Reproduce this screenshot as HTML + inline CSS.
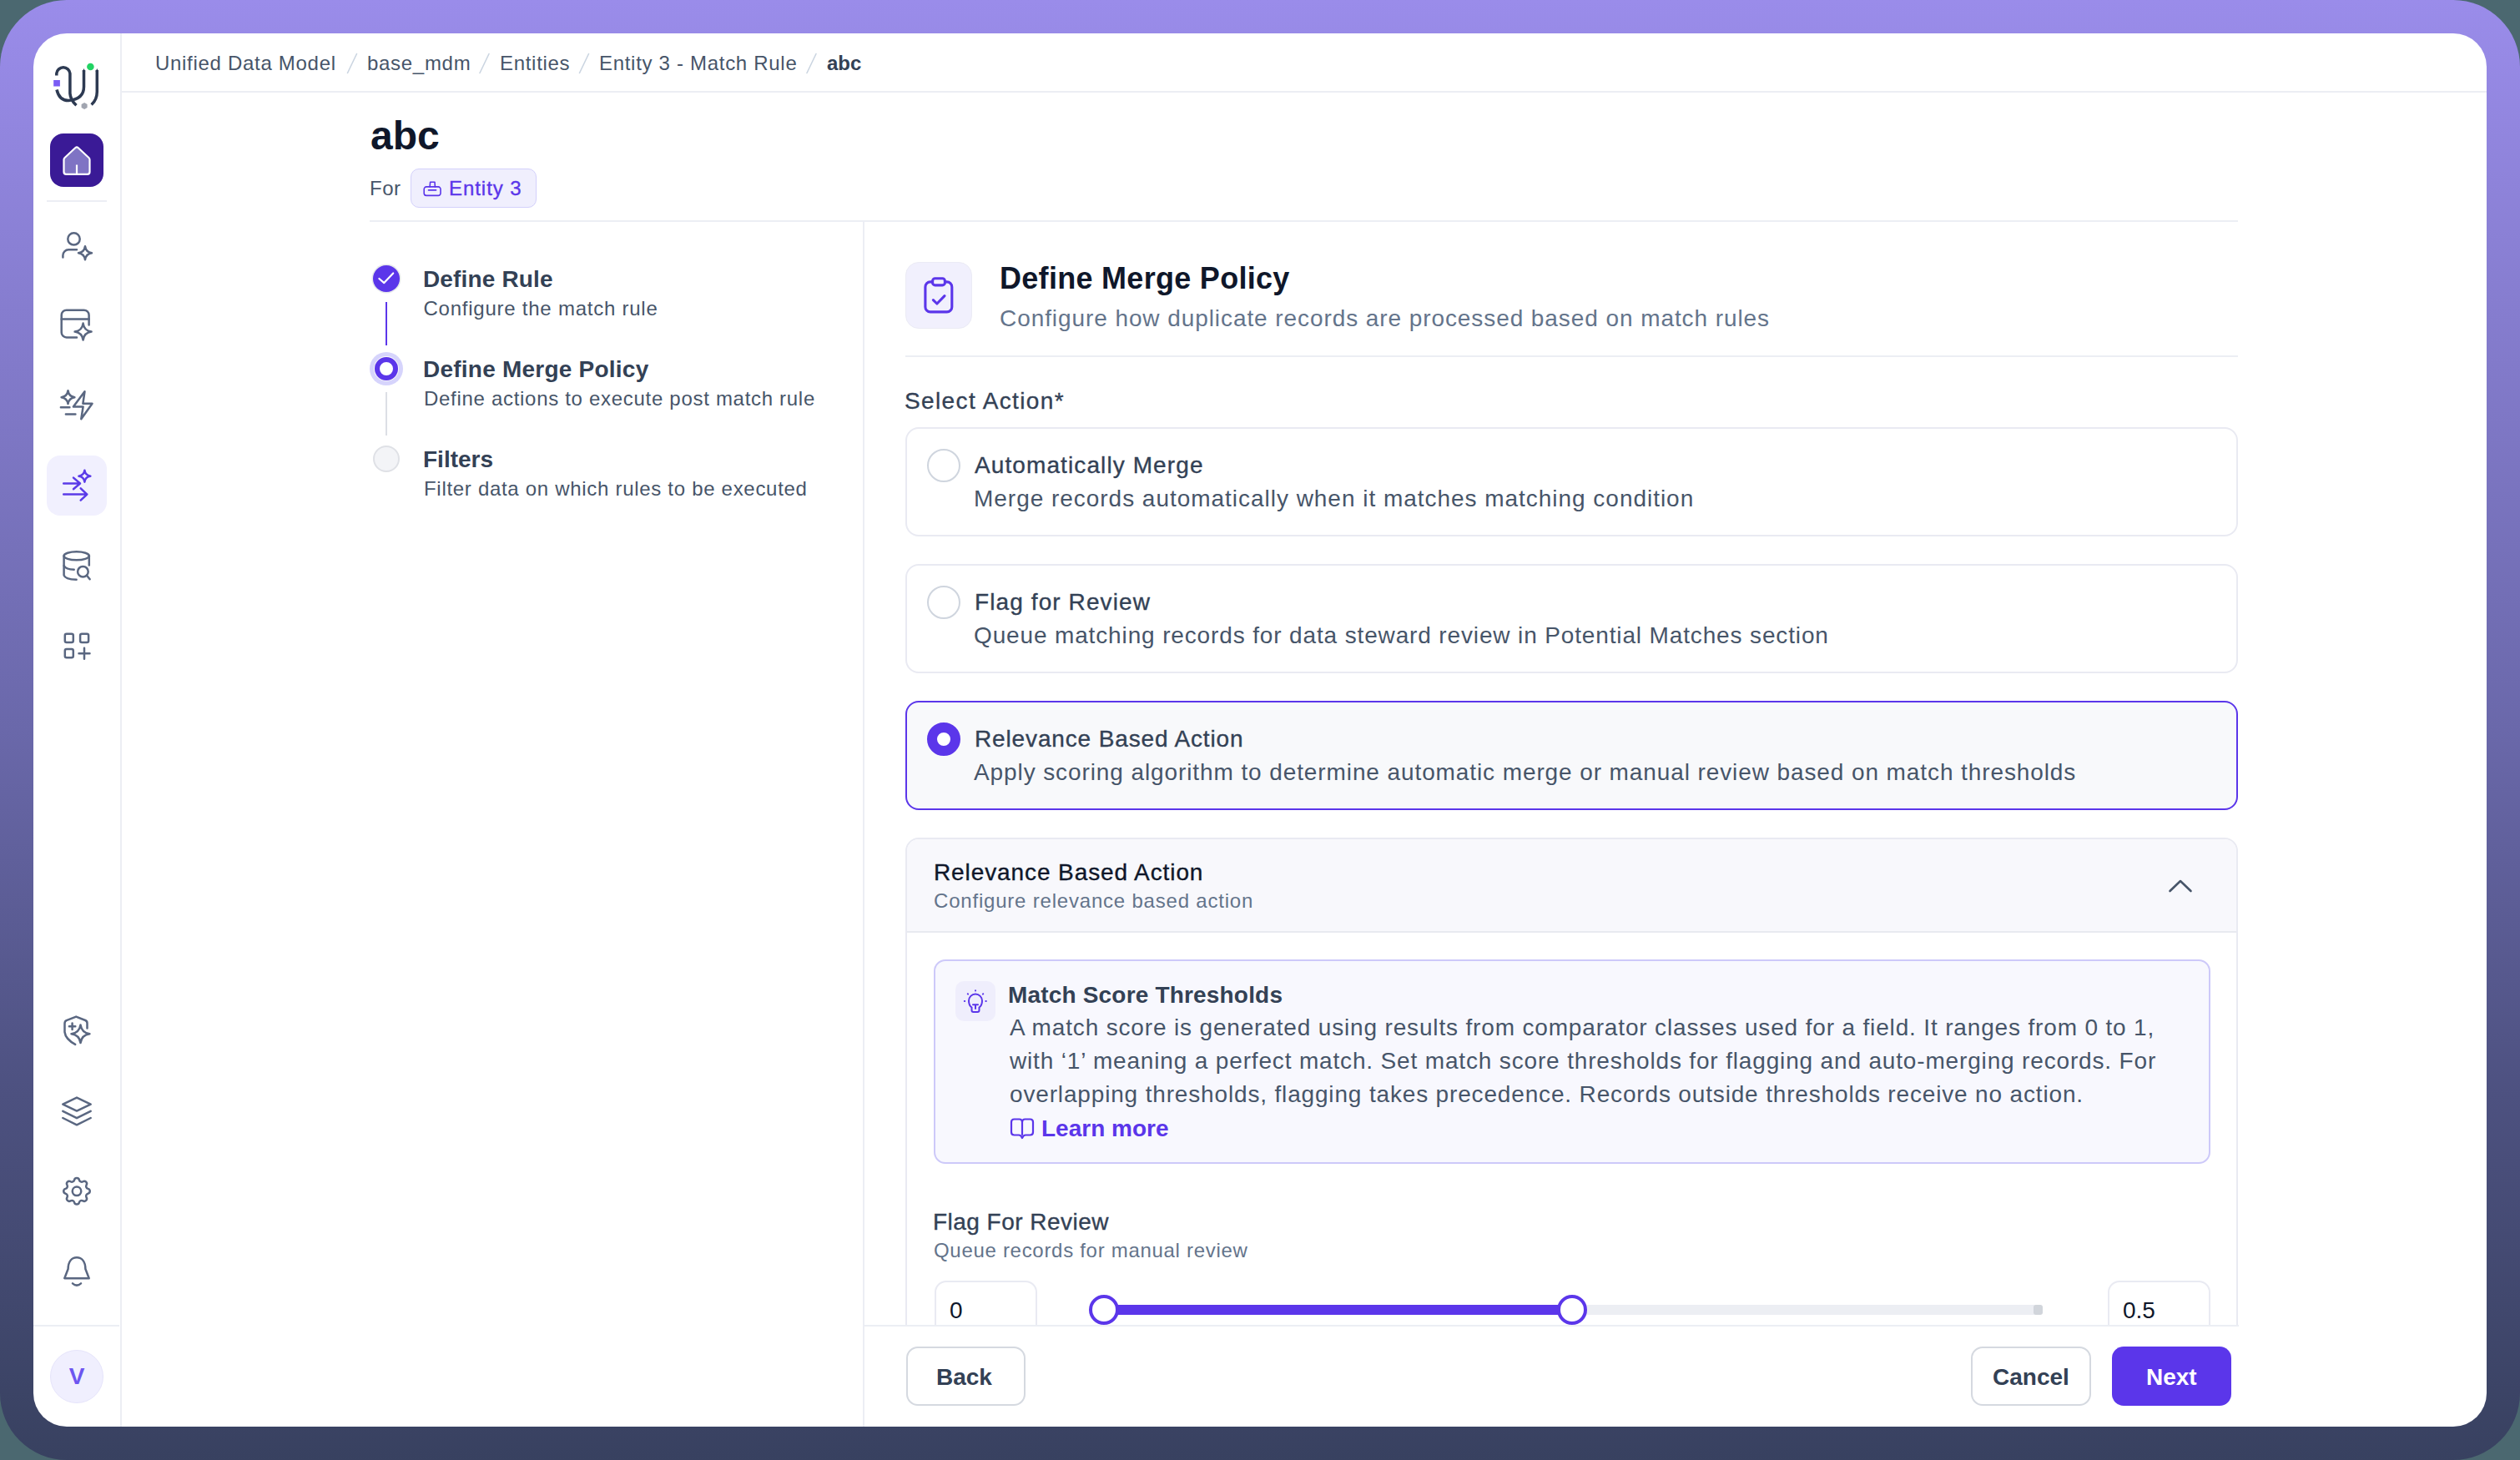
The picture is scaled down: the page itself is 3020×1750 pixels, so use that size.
<!DOCTYPE html>
<html>
<head>
<meta charset="utf-8">
<style>
*{box-sizing:border-box;margin:0;padding:0}
html,body{width:3020px;height:1750px;overflow:hidden;background:#4b6870;font-family:"Liberation Sans",sans-serif}
.frame{position:absolute;left:0;top:0;width:3020px;height:1750px;border-radius:80px;background:linear-gradient(180deg,#9a8cea 0%,#6a68aa 50%,#4d5180 75%,#384160 100%)}
.card{position:absolute;left:40px;top:40px;width:2940px;height:1670px;border-radius:40px;background:#fff;overflow:hidden}
.a{position:absolute;white-space:nowrap;line-height:1}
.ln{position:absolute;background:#eceef4}
svg{position:absolute;overflow:visible}
.ic{fill:none;stroke:#5a6781;stroke-width:2.5;stroke-linecap:round;stroke-linejoin:round}
.t24{font-size:24px;letter-spacing:0.7px}
.t28{font-size:28px;letter-spacing:0.87px}
.med{-webkit-text-stroke:0.35px currentColor}
</style>
</head>
<body>
<div class="frame"></div>
<div class="card"></div>

<!-- sidebar border, topbar border -->
<div class="ln" style="left:144px;top:40px;width:2px;height:1670px"></div>
<div class="ln" style="left:145px;top:109px;width:2835px;height:2px"></div>
<div class="ln" style="left:56px;top:240px;width:72px;height:2px"></div>
<div class="ln" style="left:40px;top:1588px;width:103px;height:2px"></div>

<!-- LOGO -->
<svg style="left:58px;top:68px" width="70" height="70" viewBox="0 0 70 70">
  <g fill="none" stroke="#2d3a52" stroke-width="3.5" stroke-linecap="butt">
    <path d="M9.8 22.5 V20 A8.1 8.1 0 0 1 25.9 20 V44 Q26.5 52 33.5 58.3"/>
    <path d="M10 39.5 Q13 52.5 24 52.5 Q42.5 51 42.5 36 V16"/>
    <path d="M58.3 16 V42 Q58.3 51.5 51.6 57.5"/>
  </g>
  <rect x="6.2" y="28" width="7.7" height="7.5" fill="#7a5cf5"/>
  <polygon points="40.75,18 42.5,14 44.25,18" fill="#2d3a52"/><polygon points="56.55,18 58.3,14 60.05,18" fill="#2d3a52"/>
  <circle cx="50.4" cy="12" r="4.3" fill="#22d363"/>
  <polygon points="43.1,55 46.6,57 46.6,61 43.1,63 39.6,61 39.6,57" fill="#a1a5b0"/>
</svg>

<!-- HOME -->
<div style="position:absolute;left:60px;top:160px;width:64px;height:64px;border-radius:16px;background:#3a1a96"></div>
<svg style="left:60px;top:160px" width="64" height="64" viewBox="0 0 64 64">
  <path d="M16.5 46 V31.5 Q16.5 30 17.6 29 L30.5 17 Q32 15.6 33.5 17 L46.4 29 Q47.5 30 47.5 31.5 V46 Q47.5 48.8 44.7 48.8 H19.3 Q16.5 48.8 16.5 46 Z" fill="#7f73c4" stroke="#fff" stroke-width="2.2" stroke-linejoin="round"/>
  <path d="M32 49 V37.5" stroke="#fff" stroke-width="2.2"/>
</svg>

<!-- user-star -->
<svg class="ic" style="left:62px;top:264px" width="60" height="60" viewBox="0 0 60 60">
  <circle cx="26.5" cy="22.4" r="7.2"/>
  <path d="M13.4 44.5 V42 A6.7 6.7 0 0 1 20.1 35.3 H30"/>
  <path d="M40 31.3 Q41 38.3 48 39.3 Q41 40.3 40 47.3 Q39 40.3 32 39.3 Q39 38.3 40 31.3 Z"/>
</svg>
<!-- app window sparkle -->
<svg class="ic" style="left:62px;top:359px" width="60" height="60" viewBox="0 0 60 60">
  <path d="M30 45.4 H17.7 A6 6 0 0 1 11.7 39.4 V18.7 A6 6 0 0 1 17.7 12.7 H38.6 A6 6 0 0 1 44.6 18.7 V30.6"/>
  <path d="M11.7 23.6 H44.6"/>
  <path d="M37.6 28.6 Q38.8 37.4 47.6 38.6 Q38.8 39.8 37.6 48.6 Q36.4 39.8 27.6 38.6 Q36.4 37.4 37.6 28.6 Z"/>
</svg>
<!-- bolt sparkle -->
<svg class="ic" style="left:62px;top:455px" width="60" height="60" viewBox="0 0 60 60">
  <path d="M19.5 13.3 Q20.5 20.2 27.4 21.2 Q20.5 22.2 19.5 29.1 Q18.5 22.2 11.6 21.2 Q18.5 20.2 19.5 13.3 Z"/>
  <path d="M10.9 33.3 H21.4 M16.9 41.5 H28.4"/>
  <path d="M39.5 14.2 L25.9 32.5 H37.6 L35.3 47.3 L48.5 28.8 H37.4 Z"/>
</svg>
<!-- selected arrows -->
<div style="position:absolute;left:56px;top:546px;width:72px;height:72px;border-radius:16px;background:#f1f0fe"></div>
<svg class="ic" style="left:56px;top:546px;stroke:#5b3be8" width="72" height="72" viewBox="0 0 72 72">
  <path d="M20.2 33.5 H40 M32 26.6 L40 33.5 L32 40.2"/>
  <path d="M20.2 46.6 H48.3 M40.7 39.4 L48.3 46.6 L40.7 53.7"/>
  <path d="M45.4 17.7 Q46.2 23.9 52.4 24.7 Q46.2 25.5 45.4 31.7 Q44.6 25.5 38.4 24.7 Q44.6 23.9 45.4 17.7 Z"/>
</svg>
<!-- database search -->
<svg class="ic" style="left:62px;top:647px" width="60" height="60" viewBox="0 0 60 60">
  <ellipse cx="29.7" cy="19.3" rx="15.1" ry="5"/>
  <path d="M14.6 19.3 V42.5 Q16 47.5 29.6 47.7"/>
  <path d="M14.6 31 Q17 35.5 26.7 35.8"/>
  <path d="M44.8 19.3 V30.4"/>
  <circle cx="37.4" cy="38.2" r="6.3"/>
  <path d="M42 42.8 L45.6 47.2"/>
</svg>
<!-- grid plus -->
<svg class="ic" style="left:62px;top:743px" width="60" height="60" viewBox="0 0 60 60">
  <rect x="15.8" y="16.8" width="10" height="10.2" rx="2"/>
  <rect x="34.1" y="16.8" width="10" height="10.2" rx="2"/>
  <rect x="15.8" y="35.1" width="10" height="10.2" rx="2"/>
  <path d="M39 33.8 V46.8 M32.5 40.3 H45.5"/>
</svg>
<!-- shield sparkle -->
<svg class="ic" style="left:62px;top:1204px" width="60" height="60" viewBox="0 0 60 60">
  <path d="M42.5 28.4 V22.5 Q42.5 20 40.3 19 L29.2 14.6 L17.6 19.2 Q15.5 20.2 15.5 22.8 V33 Q16.5 41.5 28.2 47.9"/>
  <path d="M24.6 22.6 V30 M20.9 26.3 H28.3"/>
  <path d="M34.5 24.4 Q35.9 34 45.5 35.2 Q35.9 36.4 34.5 46 Q33.1 36.4 23.5 35.2 Q33.1 34 34.5 24.4 Z"/>
</svg>
<!-- layers -->
<svg class="ic" style="left:62px;top:1300px" width="60" height="60" viewBox="0 0 60 60">
  <path d="M30 15.6 L46.7 23.6 L30 31.6 L13.3 23.6 Z"/>
  <path d="M13.3 31.8 L30 40.2 L46.7 31.8"/>
  <path d="M13.3 40 L30 48.3 L46.7 40"/>
</svg>
<!-- gear -->
<svg class="ic" style="left:62px;top:1396px" width="60" height="60" viewBox="0 0 60 60">
  <g transform="translate(30 31.8) scale(1.75) translate(-12 -12)" style="stroke-width:1.43">
  <path d="M10.325 4.317c.426 -1.756 2.924 -1.756 3.35 0a1.724 1.724 0 0 0 2.573 1.066c1.543 -.94 3.31 .826 2.37 2.37a1.724 1.724 0 0 0 1.065 2.572c1.756 .426 1.756 2.924 0 3.35a1.724 1.724 0 0 0 -1.066 2.573c.94 1.543 -.826 3.31 -2.37 2.37a1.724 1.724 0 0 0 -2.572 1.065c-.426 1.756 -2.924 1.756 -3.35 0a1.724 1.724 0 0 0 -2.573 -1.066c-1.543 .94 -3.31 -.826 -2.37 -2.37a1.724 1.724 0 0 0 -1.065 -2.572c-1.756 -.426 -1.756 -2.924 0 -3.35a1.724 1.724 0 0 0 1.066 -2.573c-.94 -1.543 .826 -3.31 2.37 -2.37c1 .608 2.296 .07 2.572 -1.065z"/>
  <circle cx="12" cy="12" r="3"/>
  </g>
</svg>
<!-- bell -->
<svg class="ic" style="left:62px;top:1492px" width="60" height="60" viewBox="0 0 60 60">
  <path d="M15.3 40.2 H44.7 L40.4 29 C40.2 20 36 15.2 30 15.2 C24 15.2 19.8 20 19.6 29 Z"/>
  <path d="M25 46.4 Q30 50.8 35 46.4"/>
</svg>
<!-- avatar -->
<div style="position:absolute;left:60px;top:1618px;width:64px;height:64px;border-radius:50%;background:#f0effe;border:1px solid #e6e4fb"></div>
<div class="a" style="left:60px;width:64px;text-align:center;top:1636px;font-size:28px;font-weight:700;color:#6d55f0">V</div>

<!-- BREADCRUMB -->
<svg style="left:0;top:0" width="1100" height="110" viewBox="0 0 1100 110"><g stroke="#cbd5e1" stroke-width="1.6" stroke-linecap="round"><path d="M416.5 87.5 L427.5 64.5"/><path d="M575 87.5 L586 64.5"/><path d="M694.5 87.5 L705.5 64.5"/><path d="M967 87.5 L978 64.5"/></g></svg>
<div class="a t24" style="left:186px;top:64px;color:#475569">Unified Data Model</div>

<div class="a t24" style="left:440px;top:64px;color:#475569">base_mdm</div>

<div class="a t24" style="left:599px;top:64px;color:#475569">Entities</div>

<div class="a t24" style="left:718px;top:64px;color:#475569">Entity 3 - Match Rule</div>

<div class="a" style="left:991px;top:64px;font-size:24px;font-weight:700;color:#334155">abc</div>


<!-- TITLE -->
<div class="a" style="left:444px;top:139px;font-size:48px;font-weight:700;color:#0f172a">abc</div>
<div class="a t24" style="left:443px;top:214px;letter-spacing:0.5px;color:#475569">For</div>
<div style="position:absolute;left:492px;top:202px;width:151px;height:47px;border-radius:10px;background:#f0effd;border:1.5px solid #d3d0fb"></div>
<svg style="left:506px;top:215px" width="24" height="22" viewBox="0 0 24 22">
  <g fill="none" stroke="#5b36ea" stroke-width="1.6" stroke-linejoin="round" stroke-linecap="round">
    <path d="M9.1 8.9 L9.6 3.2 H15 L15.4 8.9"/>
    <path d="M5 8.9 H19.2 A2.8 2.8 0 0 1 22 11.7 V16.6 A2.8 2.8 0 0 1 19.2 19.4 H5 A2.8 2.8 0 0 1 2.2 16.6 V11.7 A2.8 2.8 0 0 1 5 8.9 Z"/>
    <path d="M7.5 12.9 H16.6"/>
  </g>
</svg>
<div class="a med" style="left:538px;top:214px;font-size:24px;letter-spacing:0.95px;color:#5b36ea">Entity 3</div>
<div class="ln" style="left:443px;top:264px;width:2239px;height:2px"></div>
<div class="ln" style="left:1034px;top:266px;width:2px;height:1444px"></div>

<!-- STEPPER -->
<div style="position:absolute;left:447px;top:318px;width:32px;height:32px;border-radius:50%;background:#5b36ea;box-shadow:0 0 0 1.5px #e5e7eb"></div>
<svg style="left:438px;top:310px" width="50" height="50" viewBox="0 0 50 50">
  <path d="M16.4 24 L22.3 29.1 L33.2 17.5" fill="none" stroke="#fff" stroke-width="2.2" stroke-linecap="round" stroke-linejoin="round"/>
</svg>
<div style="position:absolute;left:462px;top:362px;width:2px;height:52px;background:#5b36ea"></div>
<div style="position:absolute;left:443px;top:422px;width:40px;height:40px;border-radius:50%;background:#d6d4fc"></div>
<div style="position:absolute;left:448px;top:427px;width:30px;height:30px;border-radius:50%;background:#fbfbf7"></div>
<div style="position:absolute;left:449px;top:428px;width:28px;height:28px;border-radius:50%;background:#fff;border:6px solid #5b36ea"></div>
<div style="position:absolute;left:462px;top:470px;width:2px;height:52px;background:#dcdfe5"></div>
<div style="position:absolute;left:447px;top:534px;width:32px;height:32px;border-radius:50%;background:#f3f4f7;border:2px solid #dfe1e6"></div>

<div class="a" style="left:507px;top:321px;letter-spacing:0.15px;font-size:28px;font-weight:700;color:#334155">Define Rule</div>
<div class="a t24" style="left:507.5px;top:358px;letter-spacing:0.76px;color:#475569">Configure the match rule</div>
<div class="a" style="left:507px;top:429px;font-size:28px;font-weight:700;letter-spacing:0.23px;color:#334155">Define Merge Policy</div>
<div class="a t24" style="left:508px;top:466px;color:#475569">Define actions to execute post match rule</div>
<div class="a" style="left:507px;top:537px;font-size:28px;font-weight:700;color:#334155">Filters</div>
<div class="a t24" style="left:508px;top:574px;color:#475569">Filter data on which rules to be executed</div>

<!-- RIGHT HEADER -->
<div style="position:absolute;left:1085px;top:314px;width:80px;height:80px;border-radius:16px;background:#f1f0fd;border:1px solid #ebebf5"></div>
<svg style="left:1085px;top:314px" width="80" height="80" viewBox="0 0 80 80">
  <g fill="none" stroke="#5b36ea" stroke-width="3.1" stroke-linecap="round" stroke-linejoin="round">
    <path d="M32.6 23.9 H29.9 A6 6 0 0 0 23.9 29.9 V53.9 A6 6 0 0 0 29.9 59.9 H49.8 A6 6 0 0 0 55.8 53.9 V29.9 A6 6 0 0 0 49.8 23.9 H47.4"/>
    <rect x="32.6" y="19.7" width="14.8" height="8.2" rx="3"/>
    <path d="M33.4 45.6 L37.9 50 L47 40.6"/>
  </g>
</svg>
<div class="a" style="left:1198px;top:316px;font-size:36px;font-weight:700;letter-spacing:0.29px;color:#0f172a">Define Merge Policy</div>
<div class="a t28" style="left:1198px;top:368px;letter-spacing:0.92px;color:#64748b">Configure how duplicate records are processed based on match rules</div>
<div class="ln" style="left:1085px;top:426px;width:1597px;height:2px"></div>
<div class="a med" style="left:1084px;top:467px;font-size:28px;letter-spacing:1.37px;color:#334155">Select Action*</div>

<!-- OPTIONS -->
<div style="position:absolute;left:1085px;top:512px;width:1597px;height:131px;border-radius:16px;border:2px solid #e9eaf2;background:#fff"></div>
<div style="position:absolute;left:1111px;top:538px;width:40px;height:40px;border-radius:50%;border:2px solid #cfd5de;background:#fff"></div>
<div class="a med" style="left:1168px;top:544px;font-size:28px;letter-spacing:1.1px;color:#334155">Automatically Merge</div>
<div class="a t28" style="left:1167px;top:584px;letter-spacing:0.97px;color:#475569">Merge records automatically when it matches matching condition</div>

<div style="position:absolute;left:1085px;top:676px;width:1597px;height:131px;border-radius:16px;border:2px solid #e9eaf2;background:#fff"></div>
<div style="position:absolute;left:1111px;top:702px;width:40px;height:40px;border-radius:50%;border:2px solid #cfd5de;background:#fff"></div>
<div class="a med" style="left:1168px;top:708px;font-size:28px;letter-spacing:1.1px;color:#334155">Flag for Review</div>
<div class="a t28" style="left:1167px;top:748px;letter-spacing:0.86px;color:#475569">Queue matching records for data steward review in Potential Matches section</div>

<div style="position:absolute;left:1085px;top:840px;width:1597px;height:131px;border-radius:16px;border:2px solid #5b36ea;background:#f8f9fb"></div>
<div style="position:absolute;left:1111px;top:866px;width:40px;height:40px;border-radius:50%;border:12px solid #5b36ea;background:#fff"></div>
<div class="a med" style="left:1168px;top:872px;font-size:28px;letter-spacing:0.86px;color:#334155">Relevance Based Action</div>
<div class="a t28" style="left:1167px;top:912px;letter-spacing:0.9px;color:#475569">Apply scoring algorithm to determine automatic merge or manual review based on match thresholds</div>

<!-- RELEVANCE SECTION -->
<div style="position:absolute;left:1085px;top:1004px;width:1597px;height:600px;border-radius:16px;border:2px solid #e9eaf2;background:#fff;overflow:hidden">
  <div style="position:absolute;left:0;top:0;width:100%;height:112px;background:#f8f8fc;border-bottom:2px solid #e8eaf0"></div>
</div>
<div class="a med" style="left:1119px;top:1032px;font-size:28px;letter-spacing:0.9px;color:#0f172a">Relevance Based Action</div>
<div class="a t24" style="left:1119px;top:1068px;letter-spacing:0.8px;color:#64748b">Configure relevance based action</div>
<svg style="left:2598px;top:1052px" width="30" height="20" viewBox="0 0 30 20">
  <path d="M2.5 16 L15 4 L27.5 16" fill="none" stroke="#475569" stroke-width="2.6" stroke-linecap="round" stroke-linejoin="round"/>
</svg>

<!-- INFO BOX -->
<div style="position:absolute;left:1119px;top:1150px;width:1530px;height:245px;border-radius:14px;border:2px solid #cdc9f9;background:#f8f8fe"></div>
<div style="position:absolute;left:1145px;top:1176px;width:48px;height:48px;border-radius:10px;background:#efeefc"></div>
<svg style="left:1145px;top:1176px" width="48" height="48" viewBox="0 0 48 48">
  <g fill="none" stroke="#5b36ea" stroke-width="2" stroke-linecap="round" stroke-linejoin="round">
    <path d="M19.5 35 V31.5 Q16 29 16 23.5 A8 8 0 0 1 32 23.5 Q32 29 28.5 31.5 V35 Q28.5 37 26.5 37 H21.5 Q19.5 37 19.5 35 Z"/>
    <path d="M21 28.2 H27 M24 28.2 V33"/>
    <path d="M24 11.2 V11.6 M14.8 15.3 L15.1 15.6 M33.2 15.3 L32.9 15.6 M10.8 23.9 H11.2 M36.8 23.9 H36.4"/>
  </g>
</svg>
<div class="a" style="left:1208px;top:1179px;font-size:28px;font-weight:700;letter-spacing:0.18px;color:#334155">Match Score Thresholds</div>
<div class="a t28" style="left:1210px;top:1218px;letter-spacing:0.84px;color:#475569">A match score is generated using results from comparator classes used for a field. It ranges from 0 to 1,</div>
<div class="a t28" style="left:1210px;top:1258px;letter-spacing:0.84px;color:#475569">with ‘1’ meaning a perfect match. Set match score thresholds for flagging and auto-merging records. For</div>
<div class="a t28" style="left:1210px;top:1298px;letter-spacing:0.84px;color:#475569">overlapping thresholds, flagging takes precedence. Records outside thresholds receive no action.</div>
<svg style="left:1208px;top:1338px" width="34" height="34" viewBox="0 0 34 34">
  <path d="M17 7 Q17 3.5 13.5 3.5 H7.5 Q4 3.5 4 7 V19 Q4 22.5 7.5 22.5 H13 Q15.5 22.5 17 26 Q18.5 22.5 21 22.5 H26.5 Q30 22.5 30 19 V7 Q30 3.5 26.5 3.5 H20.5 Q17 3.5 17 7 V22" fill="none" stroke="#5b36ea" stroke-width="2.2" stroke-linejoin="round" stroke-linecap="round"/>
</svg>
<div class="a" style="left:1248px;top:1339px;font-size:28px;font-weight:700;color:#5b36ea">Learn more</div>

<!-- FLAG FOR REVIEW -->
<div class="a med" style="left:1118px;top:1451px;font-size:28px;letter-spacing:0.47px;color:#334155">Flag For Review</div>
<div class="a t24" style="left:1119px;top:1487px;color:#64748b">Queue records for manual review</div>
<div style="position:absolute;left:1120px;top:1535px;width:123px;height:120px;border-radius:14px;border:2px solid #e9eaf2;background:#fff"></div>
<div class="a" style="left:1138px;top:1557px;font-size:28px;color:#0f172a">0</div>
<div style="position:absolute;left:1323px;top:1564px;width:1125px;height:12px;border-radius:6px;background:#eceef3"></div>
<div style="position:absolute;left:2437px;top:1564px;width:11px;height:12px;border-radius:3px;background:#d1d5db"></div>
<div style="position:absolute;left:1323px;top:1564px;width:561px;height:12px;background:#5b36ea"></div>
<div style="position:absolute;left:1305px;top:1552px;width:36px;height:36px;border-radius:50%;border:4px solid #5b36ea;background:#fff"></div>
<div style="position:absolute;left:1866px;top:1552px;width:36px;height:36px;border-radius:50%;border:4px solid #5b36ea;background:#fff"></div>
<div style="position:absolute;left:2526px;top:1535px;width:123px;height:120px;border-radius:14px;border:2px solid #e9eaf2;background:#fff"></div>
<div class="a" style="left:2544px;top:1557px;font-size:28px;color:#0f172a">0.5</div>

<!-- FOOTER -->
<div style="position:absolute;left:1036px;top:1588px;width:1700px;height:122px;background:#fff"></div>
<div class="ln" style="left:1036px;top:1588px;width:1647px;height:2px"></div>
<div style="position:absolute;left:1086px;top:1614px;width:143px;height:71px;border-radius:14px;border:2px solid #d5d9e0;background:#fff"></div>
<div class="a" style="left:1122px;top:1637px;font-size:28px;font-weight:700;color:#334155">Back</div>
<div style="position:absolute;left:2362px;top:1614px;width:144px;height:71px;border-radius:14px;border:2px solid #d5d9e0;background:#fff"></div>
<div class="a" style="left:2388px;top:1637px;font-size:28px;font-weight:700;color:#334155">Cancel</div>
<div style="position:absolute;left:2531px;top:1614px;width:143px;height:71px;border-radius:14px;background:#5b36ea"></div>
<div class="a" style="left:2572px;top:1637px;font-size:28px;font-weight:700;color:#fff">Next</div>

</body>
</html>
